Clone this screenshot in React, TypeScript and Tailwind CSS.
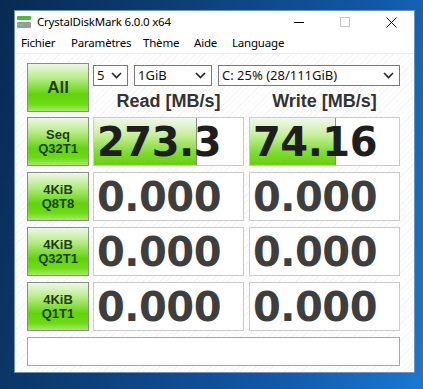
import React from 'react';

const greenBtn =
  'border border-[#8c8c8c] bg-[linear-gradient(to_bottom,#eef8e6_0%,#b6ec86_30%,#62d40a_65%,#6cdb14_85%,#a4ec66_100%)] flex flex-col items-center justify-center font-["Liberation_Sans",Arial,sans-serif] font-bold text-[#1f3d12]';

const Chevron: React.FC = () => (
  <svg width="11" height="7" viewBox="0 0 11 7" className="shrink-0">
    <polyline points="1,1 5.5,5.5 10,1" fill="none" stroke="#222" strokeWidth="1.6" />
  </svg>
);

const Select: React.FC<{ value: string; width: string }> = ({ value, width }) => (
  <div
    className={`${width} h-[21px] border border-[#7a7a7a] bg-white flex items-center justify-between pl-[3px] pr-[5px] text-[13px] text-[#111] font-["Noto_Sans",sans-serif]`}
  >
    <span className="leading-none">{value}</span>
    <Chevron />
  </div>
);

const Cell: React.FC<{ value: string; fill?: string }> = ({ value, fill }) => (
  <div className="relative w-[151px] h-full border border-[#cacaca] bg-white overflow-hidden">
    {fill && (
      <div
        className={`absolute left-0 top-0 bottom-0 ${fill} border-r border-[#8a8a8a] bg-[linear-gradient(to_bottom,#f2f8ee_0%,#c9ef9f_35%,#7ddb2c_75%,#66d10e_100%)]`}
      />
    )}
    <div
      className={`relative h-full flex items-center pl-[3px] font-["DejaVu_Sans",Verdana,sans-serif] font-bold text-[40px] tracking-[-0.5px] ${
        fill ? 'text-[#1e1e1e]' : 'text-[#3e3e3e]'
      }`}
    >
      {value}
    </div>
  </div>
);

const rows = [
  { a: 'Seq', b: 'Q32T1', read: '273.3', write: '74.16', rf: 'w-[103px]', wf: 'w-[86px]' },
  { a: '4KiB', b: 'Q8T8', read: '0.000', write: '0.000' },
  { a: '4KiB', b: 'Q32T1', read: '0.000', write: '0.000' },
  { a: '4KiB', b: 'Q1T1', read: '0.000', write: '0.000' },
];

const App: React.FC = () => {
  return (
    <div className="w-[423px] h-[389px] overflow-hidden bg-[linear-gradient(105deg,#082a52_0%,#0d3f78_35%,#1157a6_70%,#1b78d2_100%)] pl-[14px] pt-[10px]">
      <div className="w-[401px] h-[363px] bg-white flex flex-col border border-[#6f93bd]">
        {/* title bar */}
        <div className="h-[22px] flex items-center shrink-0">
          <svg width="14" height="12" viewBox="0 0 14 12" className="ml-[2px]">
            <rect x="0" y="0" width="14" height="4" rx="1" fill="#3fbf3a" />
            <rect x="0" y="6" width="14" height="6" rx="1" fill="#9a9a9a" />
            <rect x="1.5" y="8" width="4" height="2" fill="#5fdc4a" />
          </svg>
          <span className="ml-[6px] text-[11.5px] text-black font-['Noto_Sans',sans-serif] tracking-[-0.2px]">
            CrystalDiskMark 6.0.0 x64
          </span>
          <div className="ml-auto flex h-full">
            <div className="w-[46px] flex items-center justify-center">
              <div className="w-[10px] h-px bg-black" />
            </div>
            <div className="w-[46px] flex items-center justify-center">
              <div className="w-[10px] h-[10px] border border-[#c4c4c4]" />
            </div>
            <div className="w-[46px] flex items-center justify-center">
              <svg width="11" height="11" viewBox="0 0 11 11">
                <path d="M0.5 0.5 L10.5 10.5 M10.5 0.5 L0.5 10.5" stroke="#111" strokeWidth="1" />
              </svg>
            </div>
          </div>
        </div>
        {/* menu bar */}
        <div className="h-[21px] flex items-center shrink-0 border-b border-[#ececec] pl-[6px] text-[11.5px] text-black font-['Noto_Sans',sans-serif] tracking-[-0.2px]">
          <span className="w-[50px]">Fichier</span>
          <span className="w-[72px]">Paramètres</span>
          <span className="w-[51px]">Thème</span>
          <span className="w-[38px]">Aide</span>
          <span>Language</span>
        </div>
        {/* content */}
        <div className="flex-1 bg-[repeating-linear-gradient(135deg,#ffffff_0px,#ffffff_3px,#f6f6f6_3px,#f6f6f6_4px)] pl-[12px] pt-[9px] flex flex-col">
          <div className="flex gap-[4px] h-[49px]">
            <div className={`w-[62px] h-full ${greenBtn} text-[17px]`}>All</div>
            <div className="flex flex-col">
              <div className="flex gap-[6px] mt-[2px]">
                <Select value="5" width="w-[35px]" />
                <Select value="1GiB" width="w-[78px]" />
                <Select value="C: 25% (28/111GiB)" width="w-[182px]" />
              </div>
              <div className="flex gap-[5px] mt-[6px] font-['Liberation_Sans',Arial,sans-serif] font-bold text-[18px] text-[#333] leading-none">
                <div className="w-[151px] text-center">Read [MB/s]</div>
                <div className="w-[151px] text-center">Write [MB/s]</div>
              </div>
            </div>
          </div>
          <div className="flex flex-col gap-[6px] mt-[5px]">
            {rows.map((r, i) => (
              <div key={i} className="flex h-[49px]">
                <div className={`w-[62px] h-full ${greenBtn} text-[13px] leading-[14px]`}>
                  <span>{r.a}</span>
                  <span>{r.b}</span>
                </div>
                <div className="ml-[4px] h-full">
                  <Cell value={r.read} fill={r.rf} />
                </div>
                <div className="ml-[5px] h-full">
                  <Cell value={r.write} fill={r.wf} />
                </div>
              </div>
            ))}
          </div>
          <div className="mt-[6px] w-[373px] h-[29px] border border-[#a8a8a8] bg-white" />
        </div>
      </div>
    </div>
  );
};

export default App;
